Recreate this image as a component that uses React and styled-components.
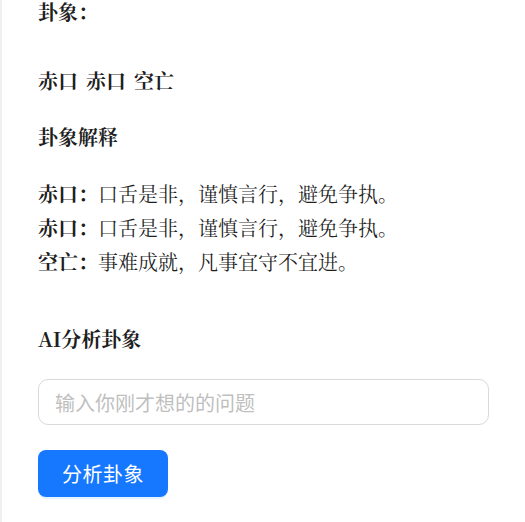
import React from "react";
import styled, { createGlobalStyle } from "styled-components";

const Global = createGlobalStyle`
  html, body { margin: 0; padding: 0; background: #fff; }
  body {
    font-family: "Noto Serif CJK SC", "Liberation Serif", serif;
    color: rgba(0, 0, 0, 0.88);
  }
`;

const Page = styled.div`
  min-height: 522px;
  border-left: 2px solid #f0f0f0;
  padding: 0 36px;
  box-sizing: border-box;
  display: flex;
  flex-direction: column;
  align-items: flex-start;
`;

const Title = styled.h2`
  margin: 0;
  font-size: 20px;
  line-height: 23px;
  font-weight: 700;
`;

const Heading = styled.h3`
  margin: ${(p) => p.$top}px 0 0 0;
  font-size: 20px;
  line-height: 30px;
  font-weight: 700;
  word-spacing: ${(p) => p.$wordSpacing || 0}px;
`;

const Lines = styled.div`
  margin-top: 25px;
  display: flex;
  flex-direction: column;
`;

const Line = styled.div`
  font-size: 20px;
  line-height: 34px;
`;

const Label = styled.strong`
  font-weight: 700;
`;

const Input = styled.input`
  display: block;
  margin-top: 25px;
  width: 100%;
  height: 46px;
  box-sizing: border-box;
  border: 1px solid #d9d9d9;
  border-radius: 10px;
  padding: 0 16px;
  font-size: 20px;
  font-family: "Noto Sans CJK SC", sans-serif;
  color: rgba(0, 0, 0, 0.88);
  background: #fff;
  outline: none;
  &::placeholder { color: #bfbfbf; }
`;

const Button = styled.button`
  display: block;
  margin-top: 25px;
  width: 130px;
  height: 47px;
  border: none;
  border-radius: 8px;
  background: #1677ff;
  color: #fff;
  font-size: 20px;
  font-family: "Noto Sans CJK SC", sans-serif;
  letter-spacing: 0.5px;
  box-shadow: 0 2px 0 rgba(5, 145, 255, 0.1);
  cursor: pointer;
`;

const explanations = [
  { name: "赤口", text: "口舌是非，谨慎言行，避免争执。" },
  { name: "赤口", text: "口舌是非，谨慎言行，避免争执。" },
  { name: "空亡", text: "事难成就，凡事宜守不宜进。" },
];

export default function App() {
  return (
    <>
      <Global />
      <Page>
        <Title>卦象：</Title>
        <Heading $top={43} $wordSpacing={3}>赤口 赤口 空亡</Heading>
        <Heading $top={26}>卦象解释</Heading>
        <Lines>
          {explanations.map((e, i) => (
            <Line key={i}>
              <Label>{e.name}：</Label>
              {e.text}
            </Line>
          ))}
        </Lines>
        <Heading $top={45}>AI分析卦象</Heading>
        <Input placeholder="输入你刚才想的的问题" />
        <Button>分析卦象</Button>
      </Page>
    </>
  );
}
